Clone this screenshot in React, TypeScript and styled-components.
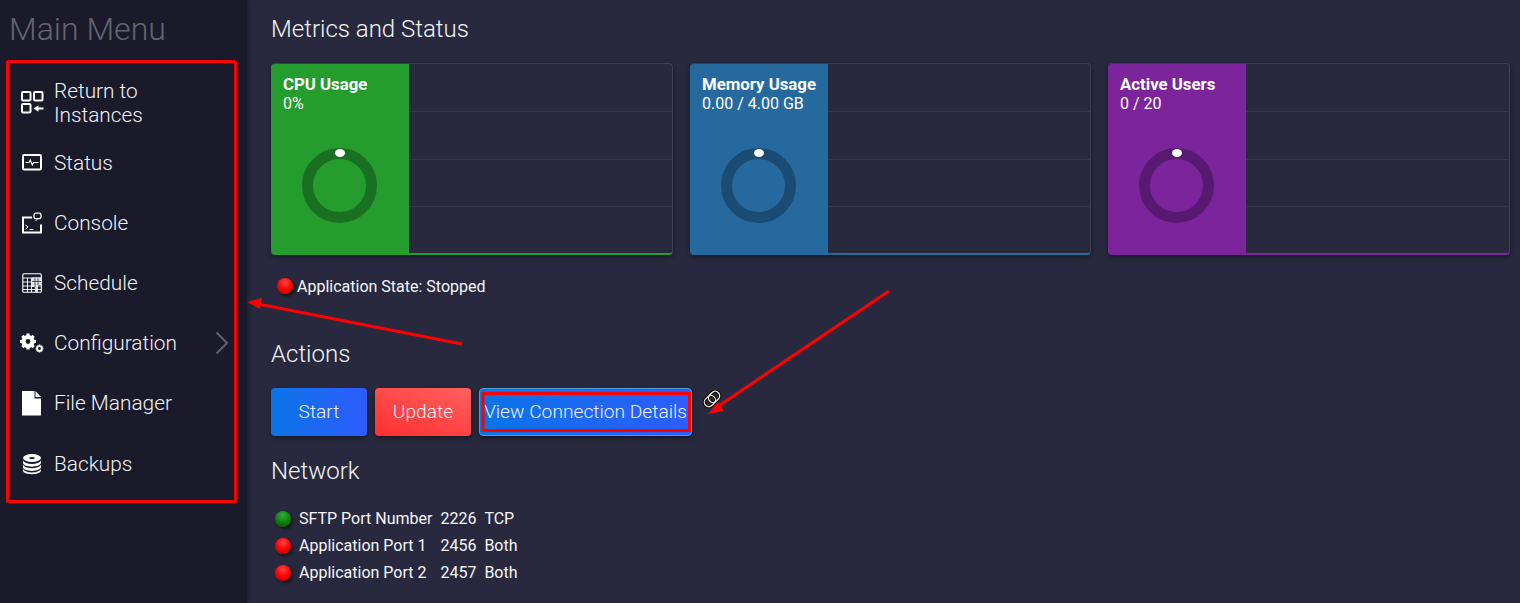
import React from "react";
import styled, { createGlobalStyle } from "styled-components";

const Global = createGlobalStyle`
  html, body { margin: 0; padding: 0; background: #28293e; }
  body { font-family: Roboto, "Liberation Sans", sans-serif; color: #fff; overflow: hidden; }
`;

const Page = styled.div`
  position: relative;
  display: flex;
  width: 1520px;
  height: 603px;
  overflow: hidden;
  background: #28293e;
`;

const Sidebar = styled.aside`
  flex: 0 0 247px;
  height: 603px;
  background: #1a1a2b;
  box-shadow: 2px 0 4px rgba(0, 0, 0, 0.2);
  padding: 9px 0 0 10px;
  box-sizing: border-box;
`;

const SideTitle = styled.h1`
  margin: 0 0 24px -1px;
  font-size: 32px;
  line-height: 40px;
  font-weight: 300;
  color: #636470;
`;

const Menu = styled.nav`
  display: flex;
  flex-direction: column;
`;

const MenuItem = styled.div`
  display: flex;
  align-items: center;
  height: 60px;
  padding-left: 10px;
  width: 219px;
  box-sizing: border-box;
  font-size: 20.8px;
  line-height: 24px;
  font-weight: 300;
  color: #f2f2f4;
  &:last-child { margin-top: 1px; }
`;

const IconSlot = styled.span`
  flex: 0 0 24px;
  width: 24px;
  height: 24px;
  margin-right: 10px;
  display: flex;
  align-items: center;
  justify-content: center;
`;

const MenuLabel = styled.span`
  flex: 1;
  max-width: 150px;
`;

const Chevron = styled.svg`
  margin-left: auto;
`;

const Main = styled.main`
  flex: 1;
  padding: 14px 10px 0 24px;
  min-width: 0;
`;

const Heading = styled.h2<{ $mt?: number }>`
  margin: ${(p) => p.$mt ?? 0}px 0 0;
  font-size: 24px;
  line-height: 30px;
  font-weight: 300;
  color: #f4f4f6;
`;

const Cards = styled.div`
  display: grid;
  grid-template-columns: 402px 401px 402px;
  gap: 17px;
  margin-top: 19px;
`;

const Card = styled.div<{ $c: string }>`
  display: flex;
  height: 192px;
  box-sizing: border-box;
  border-radius: 4px;
  overflow: hidden;
  background: #28293e;
  border-top: 1px solid #3d3f53;
  border-right: 1px solid #3d3f53;
  border-bottom: 2px solid ${(p) => p.$c};
  box-shadow: 0 2px 5px rgba(0, 0, 0, 0.4);
`;

const CardColor = styled.div<{ $c: string }>`
  flex: 0 0 138px;
  margin: -1px 0 -2px;
  background: ${(p) => p.$c};
  padding: 12px 12px 0;
  box-sizing: border-box;
  display: flex;
  flex-direction: column;
`;

const CardTitle = styled.div`
  font-size: 16.8px;
  line-height: 19px;
  font-weight: 700;
  color: #fff;
`;

const CardValue = styled.div`
  font-size: 16px;
  line-height: 19px;
  font-weight: 400;
  color: #fff;
`;

const Gauge = styled.div`
  position: relative;
  align-self: center;
  width: 75px;
  height: 75px;
  margin: 35px 2px 0 0;
  box-sizing: border-box;
  border: 11px solid rgba(0, 0, 0, 0.28);
  border-radius: 50%;
  &::after {
    content: "";
    position: absolute;
    top: -10px;
    left: 22px;
    width: 10px;
    height: 8px;
    border-radius: 50%;
    background: #fff;
  }
`;

const Chart = styled.div`
  flex: 1;
  display: grid;
  grid-template-rows: 48px 48px 47px 1fr;
`;

const ChartRow = styled.div`
  border-bottom: 1px solid #35374b;
  &:last-child { border-bottom: none; }
`;

const StateRow = styled.div`
  display: flex;
  align-items: center;
  margin: 21px 0 0 6px;
  height: 20px;
  font-size: 16px;
  color: #f6f6f8;
`;

const Led = styled.span<{ $on?: boolean }>`
  flex: 0 0 16px;
  width: 16px;
  height: 16px;
  border-radius: 50%;
  margin-right: 4px;
  background: ${(p) =>
    p.$on
      ? "radial-gradient(circle at 50% 28%, #33aa33 0%, #0f800f 50%, #064d06 100%)"
      : "radial-gradient(circle at 50% 28%, #ff4545 0%, #f00 50%, #a80000 100%)"};
  box-shadow: 2px 2px 3px rgba(0, 0, 0, 0.55);
`;

const Actions = styled.div`
  display: flex;
  align-items: center;
  gap: 8px;
  margin-top: 19px;
`;

const Btn = styled.button<{ $bg: string; $w: number; $outlined?: boolean }>`
  width: ${(p) => p.$w}px;
  height: 48px;
  padding: 0 0 2px;
  box-sizing: border-box;
  border: ${(p) => (p.$outlined ? "1px solid #4f9be0" : "none")};
  border-radius: 4px;
  background: ${(p) => p.$bg};
  color: #eef2ff;
  font-family: inherit;
  font-size: 19.2px;
  font-weight: 300;
  white-space: nowrap;
  box-shadow: 0 2px 5px rgba(0, 0, 0, 0.45);
`;

const Clip = styled.span`
  display: flex;
  margin-left: 2px;
  margin-top: -26px;
`;

const PortList = styled.div`
  display: grid;
  grid-template-columns: auto auto auto;
  justify-content: start;
  column-gap: 8px;
  margin: 19px 0 0 4px;
`;

const PortName = styled.div`
  display: flex;
  align-items: center;
  height: 27px;
  font-size: 16px;
  color: #f6f6f8;
`;

const PortCell = styled.div`
  height: 27px;
  line-height: 27px;
  font-size: 16px;
  color: #f6f6f8;
`;

const PortLed = styled(Led)`
  margin-right: 8px;
`;

const Annot = styled.svg`
  position: absolute;
  left: 0;
  top: 0;
  pointer-events: none;
`;

const W = { fill: "none", stroke: "#fff", strokeWidth: 2 };

const cards = [
  { t: "CPU Usage", v: "0%", c: "#249c2e" },
  { t: "Memory Usage", v: "0.00 / 4.00 GB", c: "#25699f" },
  { t: "Active Users", v: "0 / 20", c: "#7b249c" },
];

const ports = [
  { n: "SFTP Port Number", p: "2226", k: "TCP", on: true },
  { n: "Application Port 1", p: "2456", k: "Both" },
  { n: "Application Port 2", p: "2457", k: "Both" },
];

const items = [
  {
    l: "Return to Instances",
    i: (
      <svg width="24" height="24" viewBox="0 0 24 24">
        <rect x="2" y="1" width="8.500" height="8.500" rx="1" {...W} />
        <rect x="14" y="1" width="8.500" height="8.500" rx="1" {...W} />
        <rect x="2" y="13" width="8.500" height="8.500" rx="1" {...W} />
        <path d="M13.500 17.500l5-3.200v2.300h5v1.800h-5v2.300z" fill="#fff" />
      </svg>
    ),
  },
  {
    l: "Status",
    i: (
      <svg width="24" height="24" viewBox="0 0 24 24">
        <rect x="3" y="4" width="18" height="14.500" rx="1" {...W} />
        <path d="M5.500 11.500H9l1.300-2.500 2 5 1.400-2.500h4.800" fill="none" stroke="#fff" strokeWidth="1.100" />
      </svg>
    ),
  },
  {
    l: "Console",
    i: (
      <svg width="24" height="24" viewBox="0 0 24 24">
        <path d="M12 6.500H3v15h18v-8" {...W} />
        <rect x="14" y="2.200" width="7" height="5.500" rx="1.800" {...W} strokeWidth={1.300} />
        <path d="M17.500 8l-2 2M5.500 14l2.600 2-2.600 2M9.500 18.500h4" fill="none" stroke="#fff" strokeWidth="1" />
      </svg>
    ),
  },
  {
    l: "Schedule",
    i: (
      <svg width="24" height="24" viewBox="0 0 24 24">
        <rect x="2.800" y="2.800" width="18.500" height="18.500" rx="1" {...W} strokeWidth={1.100} />
        <path d="M3 7h18.500M3 11h18.500M3 15h18.500M3 18.500h18.500M7.500 7v14M11.500 7v14" stroke="#fff" strokeWidth="0.900" fill="none" />
        <path d="M12 6.500h9v7.500h-3v7h-3.200v-5H12z" fill="#fff" opacity="0.850" />
        <path d="M15 7v9M18 7v7M12 10.500h9" stroke="#1a1a2b" strokeWidth="0.700" />
      </svg>
    ),
  },
  {
    l: "Configuration",
    arrow: true,
    i: (
      <svg width="24" height="24" viewBox="0 0 24 24">
        <circle cx="8" cy="10.500" r="4.500" fill="none" stroke="#fff" strokeWidth="4.200" />
        <path
          d="M8 2.500v3M8 15.500v3M0 10.500h3M13 10.500h3M2.300 4.800l2.100 2.100M11.600 14.100l2.100 2.100M2.300 16.200l2.100-2.100M11.600 6.900l2.100-2.100"
          stroke="#fff"
          strokeWidth="3.200"
        />
        <circle cx="19.500" cy="17.500" r="2.400" fill="none" stroke="#fff" strokeWidth="1.900" />
        <path
          d="M19.500 13.600v1.600M19.500 19.800v1.600M15.600 17.500h1.600M21.800 17.500h1.600M16.800 14.800l1 1M21.200 19.200l1 1M16.800 20.200l1-1M21.200 15.800l1-1"
          stroke="#fff"
          strokeWidth="1.400"
        />
      </svg>
    ),
  },
  {
    l: "File Manager",
    i: (
      <svg width="20" height="25" viewBox="0 0 20 25">
        <path d="M0 0h12.500v7.500H19V24.500H0zM13.500 0l5.500 6h-5.500z" fill="#fff" />
      </svg>
    ),
  },
  {
    l: "Backups",
    i: (
      <svg width="24" height="24" viewBox="0 0 24 24">
        <ellipse cx="12" cy="6" rx="9" ry="4" fill="#fff" />
        <ellipse cx="12" cy="6" rx="2.800" ry="1.100" fill="#1a1a2b" />
        <path d="M3 8.600c1.200 2.200 4.800 3.400 9 3.400s7.800-1.200 9-3.400v2.500c-.6 2.200-4.400 3.600-9 3.600s-9-1.400-9-3.600z" fill="#fff" />
        <path d="M3 12.800c1.200 2.200 4.800 3.400 9 3.400s7.800-1.200 9-3.400v2.500c-.6 2.200-4.400 3.600-9 3.600s-9-1.400-9-3.600z" fill="#fff" />
        <path d="M3 17c1.200 2.200 4.800 3.400 9 3.400s7.800-1.200 9-3.400v1.800c-.6 2.200-4.400 3.400-9 3.400s-9-1.200-9-3.400z" fill="#fff" />
      </svg>
    ),
  },
];

export default function App() {
  return (
    <Page>
      <Global />
      <Sidebar>
        <SideTitle>Main Menu</SideTitle>
        <Menu>
          {items.map((it) => (
            <MenuItem key={it.l}>
              <IconSlot>{it.i}</IconSlot>
              <MenuLabel>{it.l}</MenuLabel>
              {it.arrow && (
                <Chevron width="14" height="24" viewBox="0 0 14 24">
                  <path d="M1.500 1.500L12 12 1.500 22.500" fill="none" stroke="#5f606c" strokeWidth="2" />
                </Chevron>
              )}
            </MenuItem>
          ))}
        </Menu>
      </Sidebar>
      <Main>
        <Heading>Metrics and Status</Heading>
        <Cards>
          {cards.map((c) => (
            <Card key={c.t} $c={c.c}>
              <CardColor $c={c.c}>
                <CardTitle>{c.t}</CardTitle>
                <CardValue>{c.v}</CardValue>
                <Gauge />
              </CardColor>
              <Chart>
                <ChartRow />
                <ChartRow />
                <ChartRow />
                <ChartRow />
              </Chart>
            </Card>
          ))}
        </Cards>
        <StateRow>
          <Led />
          Application State: Stopped
        </StateRow>
        <Heading $mt={43}>Actions</Heading>
        <Actions>
          <Btn $w={96} $bg="linear-gradient(90deg, #0b74e5, #2e5cff)">Start</Btn>
          <Btn $w={96} $bg="linear-gradient(20deg, #ff2f2f, #ff6060)">Update</Btn>
          <Btn $w={213} $outlined $bg="linear-gradient(90deg, #0b74e5, #2e5cff)">View Connection Details</Btn>
          <Clip>
            <svg width="20" height="20" viewBox="0 0 20 20">
              <g transform="rotate(-45 10 10)" fill="none">
                <rect x="1" y="5.500" width="12" height="9" rx="4.500" stroke="#000" strokeWidth="3" />
                <rect x="7" y="5.500" width="12" height="9" rx="4.500" stroke="#000" strokeWidth="3" />
                <rect x="1" y="5.500" width="12" height="9" rx="4.500" stroke="#e9dcb8" strokeWidth="1.400" />
                <rect x="7" y="5.500" width="12" height="9" rx="4.500" stroke="#f4f4f4" strokeWidth="1.400" />
              </g>
            </svg>
          </Clip>
        </Actions>
        <Heading $mt={20}>Network</Heading>
        <PortList>
          {ports.map((p) => (
            <React.Fragment key={p.n}>
              <PortName>
                <PortLed $on={p.on} />
                {p.n}
              </PortName>
              <PortCell>{p.p}</PortCell>
              <PortCell>{p.k}</PortCell>
            </React.Fragment>
          ))}
        </PortList>
      </Main>
      <Annot width="1520" height="603" viewBox="0 0 1520 603">
        <rect x="7.500" y="61.500" width="228" height="440" rx="1" fill="none" stroke="#f00" strokeWidth="3" />
        <rect x="483" y="393.500" width="206.500" height="37" fill="none" stroke="#f00" strokeWidth="3" />
        <path d="M462 344L258 304" stroke="#f00" strokeWidth="3" />
        <path d="M247 302l15-4-2 11z" fill="#f00" />
        <path d="M889 291L720 405" stroke="#f00" strokeWidth="3" />
        <path d="M708 414l10-12 6 9z" fill="#f00" />
      </Annot>
    </Page>
  );
}
